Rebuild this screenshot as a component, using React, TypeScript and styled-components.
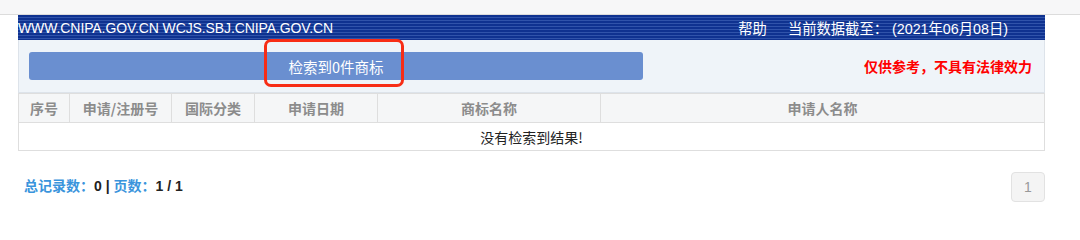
import styled, { createGlobalStyle } from "styled-components";

const GlobalStyle = createGlobalStyle`
    body {
        margin: 0;
        background: #fff;
        font-family: "Liberation Sans", "Noto Sans CJK SC", Arial, sans-serif;
    }
`

const TopStrip = styled.div`
    height: 14px;
    background: #f7f7f8;
    border-bottom: 1px solid #dcdcdc;
`

const Page = styled.div`
    width: 1027px;
    margin-left: 18px;
`

const HeaderBar = styled.div`
    height: 25px;
    display: flex;
    align-items: center;
    justify-content: space-between;
    padding-right: 37px;
    background: repeating-linear-gradient(
        to bottom,
        #0f3290 0px,
        #0f3290 2px,
        #3053aa 2px,
        #3053aa 3px
    );
    color: #fff;
`

const Domains = styled.span`
    font-size: 14px;
    letter-spacing: -0.1px;
`

const HeaderLinks = styled.div`
    display: flex;
    gap: 21px;
    font-size: 14.3px;
`

const Panel = styled.div`
    position: relative;
    height: 52px;
    display: flex;
    align-items: center;
    justify-content: space-between;
    padding: 0 12px 0 10px;
    background: #eff4f9;
    border: 1px solid #dde3ea;
    border-top: none;
`

const ResultBar = styled.div`
    width: 614px;
    height: 28px;
    display: flex;
    align-items: center;
    justify-content: center;
    border-radius: 3px;
    background: #6a8fd0;
    color: #fff;
    font-size: 14.5px;
    font-family: "Noto Sans CJK SC", sans-serif;
`

const Highlight = styled.div`
    position: absolute;
    left: 245px;
    top: -1px;
    width: 134px;
    height: 42px;
    border: 3px solid #f72d16;
    border-radius: 7px;
`

const Notice = styled.span`
    color: #f00;
    font-weight: bold;
    font-size: 14px;
    font-family: "Noto Sans CJK SC", sans-serif;
`

const Table = styled.table`
    width: 100%;
    border-collapse: collapse;
    font-family: "Noto Sans CJK SC", sans-serif;
    font-size: 14px;
`

const HeadCell = styled.th<{ $w?: number }>`
    width: ${p => (p.$w ? `${p.$w}px` : "auto")};
    height: 28px;
    padding: 0;
    background: #f5f6f7;
    border: 1px solid #dedede;
    color: #8c8c8c;
    font-weight: 600;
`

const BodyCell = styled.td`
    height: 27px;
    padding: 0;
    text-align: center;
    border: 1px solid #dedede;
    color: #222;
`

const Footer = styled.div`
    display: flex;
    align-items: center;
    justify-content: space-between;
    margin-top: 21px;
    padding-left: 6px;
`

const Summary = styled.div`
    margin-top: -4px;
    font-size: 14px;
    font-weight: bold;
    font-family: "Liberation Sans", "Noto Sans CJK SC", sans-serif;
    color: #222;
`

const Label = styled.span`
    color: #3a94dc;
`

const PageButton = styled.div`
    width: 32px;
    height: 28px;
    display: flex;
    align-items: center;
    justify-content: center;
    background: #f4f4f4;
    border: 1px solid #e2e2e2;
    border-radius: 4px;
    color: #999;
    font-size: 14px;
`

const columns: [string, number?][] = [
    ["序号", 50],
    ["申请/注册号", 101],
    ["国际分类", 82],
    ["申请日期", 122],
    ["商标名称", 222],
    ["申请人名称"],
]

export default function App() {
    return (
        <>
            <GlobalStyle />
            <TopStrip />
            <Page>
                <HeaderBar>
                    <Domains>WWW.CNIPA.GOV.CN WCJS.SBJ.CNIPA.GOV.CN</Domains>
                    <HeaderLinks>
                        <span>帮助</span>
                        <span>当前数据截至： (2021年06月08日)</span>
                    </HeaderLinks>
                </HeaderBar>
                <Panel>
                    <ResultBar>检索到0件商标</ResultBar>
                    <Notice>仅供参考，不具有法律效力</Notice>
                    <Highlight />
                </Panel>
                <Table>
                    <thead>
                        <tr>
                            {columns.map(([name, w]) => (
                                <HeadCell key={name} $w={w}>{name}</HeadCell>
                            ))}
                        </tr>
                    </thead>
                    <tbody>
                        <tr>
                            <BodyCell colSpan={6}>没有检索到结果!</BodyCell>
                        </tr>
                    </tbody>
                </Table>
                <Footer>
                    <Summary>
                        <Label>总记录数：</Label>0 | <Label>页数：</Label>1 / 1
                    </Summary>
                    <PageButton>1</PageButton>
                </Footer>
            </Page>
        </>
    )
}
